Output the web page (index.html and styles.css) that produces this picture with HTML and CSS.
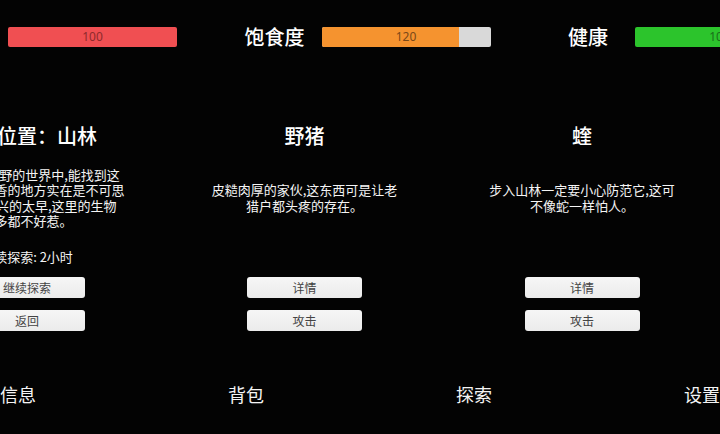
FILE: index.html
```html
<!DOCTYPE html>
<html lang="zh-CN">
<head>
<meta charset="utf-8">
<title>山林</title>
<link rel="stylesheet" href="styles.css">
</head>
<body>
<div class="screen">
  <div class="stats">
    <div class="stat">
      <div class="stat-label">生命</div>
      <div class="bar"><div class="fill fill-red" style="width:100%"></div><span class="bar-text text-red">100</span></div>
    </div>
    <div class="stat">
      <div class="stat-label">饱食度</div>
      <div class="bar"><div class="fill fill-orange" style="width:81.5%"></div><span class="bar-text text-orange">120</span></div>
    </div>
    <div class="stat">
      <div class="stat-label">健康</div>
      <div class="bar"><div class="fill fill-green" style="width:100%"></div><span class="bar-text text-green">100</span></div>
    </div>
  </div>

  <div class="panels">
    <section class="panel">
      <h2 class="panel-title">当前位置：山林</h2>
      <div class="desc">
        <p>在这一片荒野的世界中,能找到这</p>
        <p>一个鸟语花香的地方实在是不可思</p>
        <p>议, 但别高兴的太早,这里的生物</p>
        <p>大多都不好惹。</p>
      </div>
      <div class="info">持续探索: 2小时</div>
      <div class="actions">
        <button class="btn">继续探索</button>
        <button class="btn">返回</button>
      </div>
    </section>
    <section class="panel">
      <h2 class="panel-title">野猪</h2>
      <div class="desc">
        <p>皮糙肉厚的家伙,这东西可是让老</p>
        <p>猎户都头疼的存在。</p>
      </div>
      <div class="info"></div>
      <div class="actions">
        <button class="btn">详情</button>
        <button class="btn">攻击</button>
      </div>
    </section>
    <section class="panel">
      <h2 class="panel-title">蝰</h2>
      <div class="desc">
        <p>步入山林一定要小心防范它,这可</p>
        <p>不像蛇一样怕人。</p>
      </div>
      <div class="info"></div>
      <div class="actions">
        <button class="btn">详情</button>
        <button class="btn">攻击</button>
      </div>
    </section>
  </div>

  <nav class="nav">
    <span class="nav-item">信息</span>
    <span class="nav-item">背包</span>
    <span class="nav-item">探索</span>
    <span class="nav-item">设置</span>
  </nav>
</div>
</body>
</html>
```
FILE: styles.css
```css
html, body {
  margin: 0;
  padding: 0;
  background: #030303;
}
body {
  width: 720px;
  height: 434px;
  overflow: hidden;
  font-family: "Noto Sans CJK SC", "Noto Sans", sans-serif;
  color: #f4f4f4;
}
.screen {
  width: 720px;
  height: 434px;
  overflow: hidden;
  display: flex;
  flex-direction: column;
}
.stats {
  display: flex;
  gap: 50.5px;
  margin-left: -86px;
  padding-top: 27px;
}
.stat {
  display: flex;
  align-items: center;
  flex: none;
}
.stat-label {
  width: 94px;
  text-align: center;
  font-size: 20px;
  line-height: 20px;
  font-weight: 500;
  color: #ffffff;
}
.bar {
  position: relative;
  width: 169px;
  height: 20px;
  background: #d9d9d9;
  border-radius: 2px;
  overflow: hidden;
  flex: none;
}
.fill {
  height: 100%;
}
.fill-red { background: #f04f52; }
.fill-orange { background: #f5932f; }
.fill-green { background: #2cc42c; }
.bar-text {
  position: absolute;
  inset: 0;
  text-align: center;
  font-family: "Noto Sans", "Liberation Sans", sans-serif;
  font-size: 12px;
  line-height: 20px;
}
.text-red { color: #8e2a2c; }
.text-orange { color: #7a4818; }
.text-green { color: #1a6e1a; }

.panels {
  display: grid;
  grid-template-columns: repeat(3, 277.5px);
  margin-left: -111.75px;
  margin-top: 77px;
}
.panel {
  display: flex;
  flex-direction: column;
  align-items: center;
}
.panel-title {
  margin: 0;
  font-size: 20px;
  line-height: 24px;
  height: 24px;
  font-weight: 500;
  white-space: nowrap;
  color: #ffffff;
}
.desc {
  margin-top: 12px;
  height: 75px;
  display: flex;
  flex-direction: column;
  justify-content: center;
  align-items: center;
}
.desc p {
  margin: 0;
  font-size: 13px;
  line-height: 15.5px;
  white-space: pre;
  text-align: center;
}
.info {
  margin-top: 12px;
  height: 20px;
  font-size: 13px;
  line-height: 20px;
  white-space: nowrap;
}
.actions {
  margin-top: 10px;
  display: flex;
  flex-direction: column;
  gap: 12px;
}
.btn {
  width: 115px;
  height: 21px;
  padding: 0;
  border: none;
  border-radius: 3px;
  background: linear-gradient(#f6f6f6, #ebebeb);
  color: #444444;
  font-family: "Noto Sans CJK SC", "Noto Sans", sans-serif;
  font-size: 12px;
  line-height: 21px;
}
.nav {
  margin-top: 51px;
  display: flex;
  justify-content: space-between;
}
.nav-item {
  font-size: 18px;
  line-height: 24px;
  color: #f4f4f4;
}
```
